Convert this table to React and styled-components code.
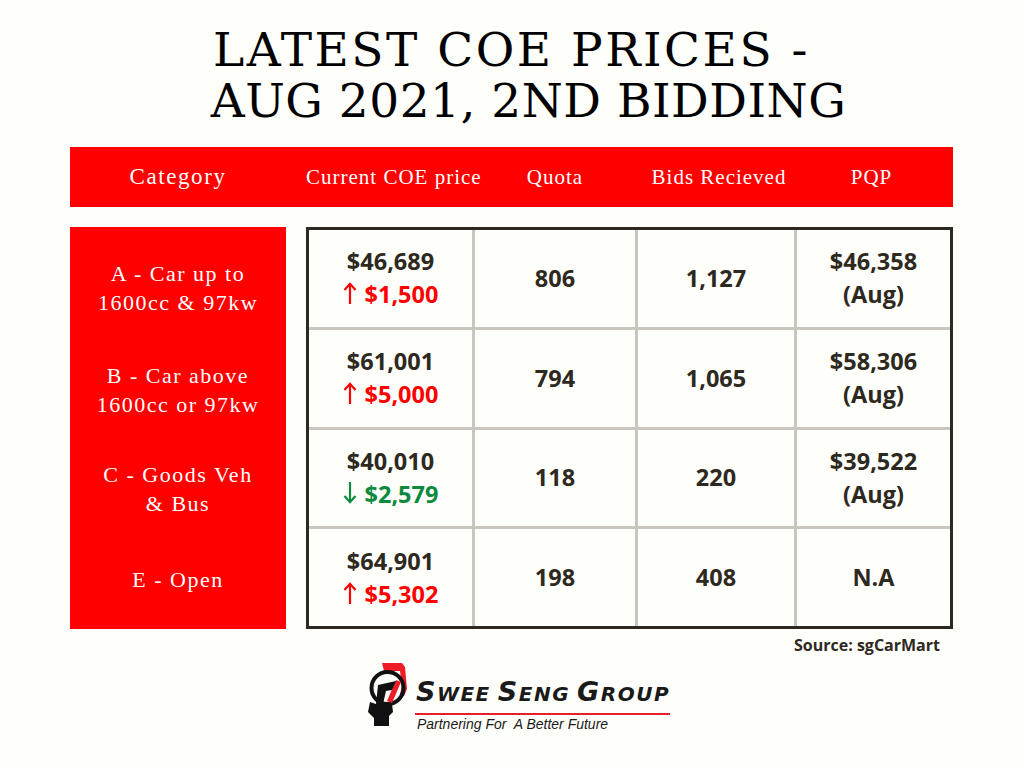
import React from 'react';
import styled, { createGlobalStyle } from 'styled-components';

const GlobalStyle = createGlobalStyle`
  html, body {
    margin: 0;
    padding: 0;
    background: #fefefb;
  }
`;

const rows = [
  {
    id: 'a',
    label: ['A - Car up to', '1600cc & 97kw'],
    price: '$46,689',
    change: '$1,500',
    up: true,
    quota: '806',
    bids: '1,127',
    pqp: ['$46,358', '(Aug)']
  },
  {
    id: 'b',
    label: ['B - Car above', '1600cc or 97kw'],
    price: '$61,001',
    change: '$5,000',
    up: true,
    quota: '794',
    bids: '1,065',
    pqp: ['$58,306', '(Aug)']
  },
  {
    id: 'c',
    label: ['C - Goods Veh', '& Bus'],
    price: '$40,010',
    change: '$2,579',
    up: false,
    quota: '118',
    bids: '220',
    pqp: ['$39,522', '(Aug)']
  },
  {
    id: 'e',
    label: ['E - Open'],
    price: '$64,901',
    change: '$5,302',
    up: true,
    quota: '198',
    bids: '408',
    pqp: ['N.A']
  }
];

// Styles
const Page = styled.div`
  width: 1024px;
  height: 768px;
  box-sizing: border-box;
  padding: 24px 71px 0 70px;
  display: flex;
  flex-direction: column;
  background: #fefefb;
  overflow: hidden;
`;

const Title = styled.h1`
  margin: 0;
  display: flex;
  flex-direction: column;
  font-family: 'DejaVu Serif', serif;
  font-weight: 400;
  font-size: 47px;
  line-height: 51px;
  text-align: center;
  color: #000;
`;

const TitleLine = styled.span`
  letter-spacing: ${p => p.spacing}px;
  padding-left: ${p => p.shift || 0}px;
  white-space: nowrap;
`;

const HeaderBar = styled.div`
  margin-top: 21px;
  height: 60px;
  background: #ff0000;
  display: grid;
  grid-template-columns: 216px 20px 172px 154px 174px 1fr;
  align-items: center;
`;

const HeaderCell = styled.div`
  grid-column: ${p => p.col};
  text-align: center;
  white-space: nowrap;
  font-family: 'Liberation Serif', serif;
  font-size: ${p => (p.big ? '23px' : '21px')};
  letter-spacing: ${p => (p.big ? '1.6px' : '1px')};
  color: #fff;
  padding-right: ${p => p.shift || 0}px;
`;

const Body = styled.div`
  margin-top: 20px;
  display: flex;
  gap: 20px;
  height: 402px;
`;

// label rows sit a little lower than the table rows, as in the original artwork
const Categories = styled.div`
  width: 216px;
  background: #ff0000;
  display: grid;
  grid-template-rows: 122px 82px 116px 64px;
`;

const CategoryLabel = styled.div`
  display: flex;
  flex-direction: column;
  align-items: center;
  justify-content: center;
  font-family: 'Liberation Serif', serif;
  font-size: 22px;
  line-height: 29px;
  color: #fff;
  letter-spacing: 1.5px;
`;

const Table = styled.div`
  flex: 1;
  border: 3px solid #2e2920;
  background: #c9c6be;
  display: grid;
  grid-template-columns: 163px 160px 156px 1fr;
  grid-template-rows: repeat(4, 1fr);
  gap: 3px;
`;

const Cell = styled.div`
  background: #fefefb;
  display: flex;
  flex-direction: column;
  align-items: center;
  justify-content: center;
  font-family: 'Open Sans', sans-serif;
  font-weight: 700;
  font-size: 23.5px;
  line-height: 33px;
  color: #2e2920;
`;

const Change = styled.span`
  color: ${p => (p.up ? '#ff0000' : '#0b8a3e')};
  white-space: nowrap;
`;

const ArrowIcon = styled.svg`
  width: 14px;
  height: 22px;
  margin-right: 8px;
  vertical-align: baseline;
  margin-bottom: -1px;
`;

const Source = styled.div`
  margin-top: 5px;
  align-self: flex-end;
  font-family: 'Open Sans', sans-serif;
  font-weight: 700;
  font-size: 16px;
  color: #2e2920;
  padding-right: 13px;
`;

const LogoWrap = styled.div`
  margin-top: 6px;
  align-self: center;
  display: flex;
  align-items: flex-start;
  gap: 2px;
  margin-left: 12px;
`;

const LogoText = styled.div`
  display: flex;
  flex-direction: column;
  padding-top: 15px;
`;

const Brand = styled.div`
  font-family: 'DejaVu Sans', sans-serif;
  font-weight: 700;
  font-style: italic;
  color: #1a1a1a;
  letter-spacing: 1.5px;
  line-height: 29px;
  border-bottom: 2px solid #e4202a;
  padding: 0 0 3px 1px;
  white-space: nowrap;
`;

const Big = styled.span`
  font-size: 27px;
`;

const Small = styled.span`
  font-size: 20px;
  margin-right: ${p => p.gap || 0}px;
`;

const Tagline = styled.div`
  margin-top: 1px;
  padding-left: 2px;
  font-family: 'Liberation Sans', Arial, sans-serif;
  font-style: italic;
  font-size: 14px;
  color: #1a1a1a;
`;

const Arrow = ({ up }) => (
  <ArrowIcon viewBox="0 0 14 22" fill="none" stroke="currentColor" strokeWidth="2.2">
    {up ? (
      <>
        <line x1="7" y1="22" x2="7" y2="2" />
        <polyline points="1.5,8 7,1.8 12.5,8" />
      </>
    ) : (
      <>
        <line x1="7" y1="0" x2="7" y2="20" />
        <polyline points="1.5,14 7,20.2 12.5,14" />
      </>
    )}
  </ArrowIcon>
);

const LogoMark = () => (
  <svg width="48" height="70" viewBox="0 0 48 70">
    <path d="M17 1 H37 L40 5 L42 27 L39 34 L35 32 L37 24 L35 9 H19 Z" fill="#ee1c25" />
    <circle cx="22.5" cy="26" r="16" fill="none" stroke="#111" strokeWidth="4" />
    <path d="M31 18 L36 20 L27 41 L22 39 Z" fill="#ee1c25" />
    <path
      d="M13 23 L31 19 L27 28 L21 29 L18 42 L27 42 L28 50 L24 54 L24 64 L9 64 L9 56 L3 50 L5 40 L11 42 Z"
      fill="#111"
    />
  </svg>
);

const App = () => (
  <>
    <GlobalStyle />
    <Page>
      <Title>
        <TitleLine spacing={2.5}>LATEST COE PRICES -</TitleLine>
        <TitleLine spacing={0.5} shift={34}>AUG 2021, 2ND BIDDING</TitleLine>
      </Title>

      <HeaderBar>
        <HeaderCell col={1} big>Category</HeaderCell>
        <HeaderCell col={3}>Current COE price</HeaderCell>
        <HeaderCell col={4}>Quota</HeaderCell>
        <HeaderCell col={5}>Bids Recieved</HeaderCell>
        <HeaderCell col={6} shift={16}>PQP</HeaderCell>
      </HeaderBar>

      <Body>
        <Categories>
          {rows.map(row => (
            <CategoryLabel key={row.id}>
              {row.label.map(line => (
                <span key={line}>{line}</span>
              ))}
            </CategoryLabel>
          ))}
        </Categories>

        <Table>
          {rows.map(row => (
            <React.Fragment key={row.id}>
              <Cell>
                <span>{row.price}</span>
                <Change up={row.up}>
                  <Arrow up={row.up} />
                  {row.change}
                </Change>
              </Cell>
              <Cell>{row.quota}</Cell>
              <Cell>{row.bids}</Cell>
              <Cell>
                {row.pqp.map(line => (
                  <span key={line}>{line}</span>
                ))}
              </Cell>
            </React.Fragment>
          ))}
        </Table>
      </Body>

      <Source>Source: sgCarMart</Source>

      <LogoWrap>
        <LogoMark />
        <LogoText>
          <Brand>
            <Big>S</Big>
            <Small gap={7}>WEE</Small>
            <Big>S</Big>
            <Small gap={7}>ENG</Small>
            <Big>G</Big>
            <Small>ROUP</Small>
          </Brand>
          <Tagline>Partnering For&nbsp; A Better Future</Tagline>
        </LogoText>
      </LogoWrap>
    </Page>
  </>
);

export default App;
